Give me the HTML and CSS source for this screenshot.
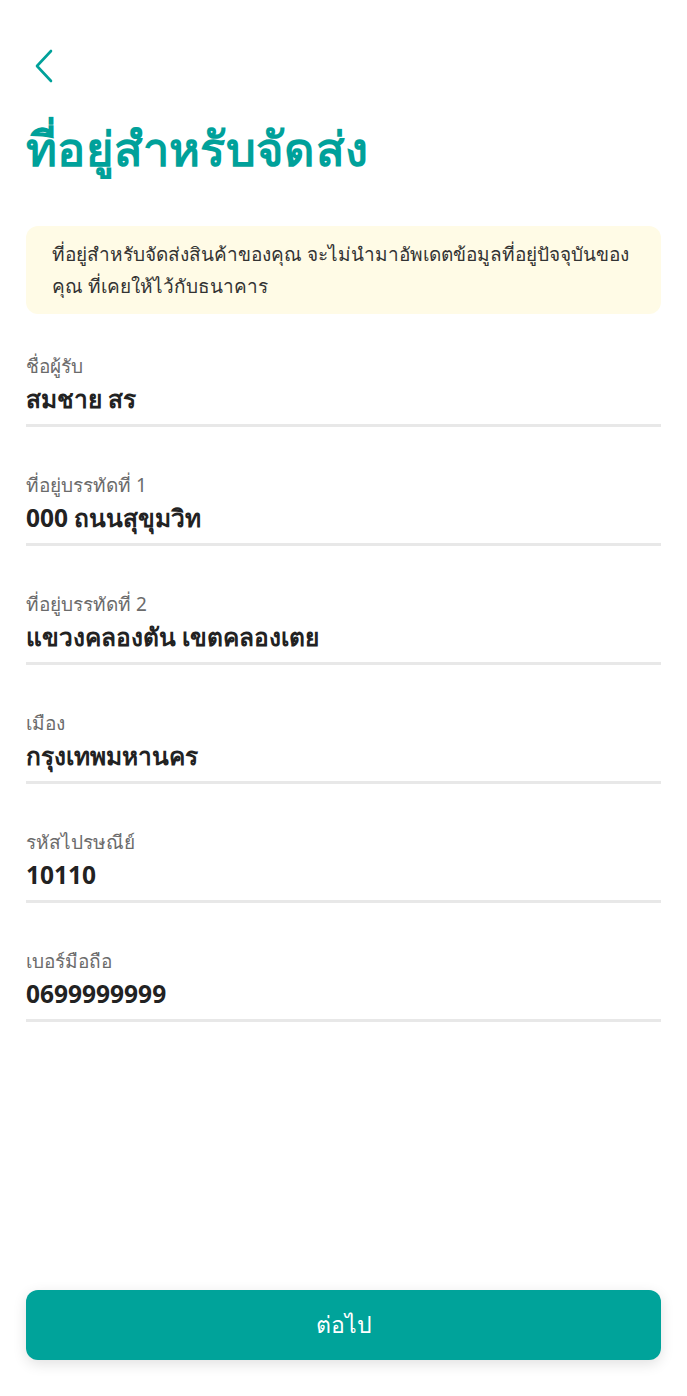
FILE: index.html
```html
<!DOCTYPE html>
<html lang="th">
<head>
  <meta charset="UTF-8" />
  <meta name="viewport" content="width=device-width, initial-scale=1" />
  <title>ที่อยู่สำหรับจัดส่ง</title>
  <link rel="stylesheet" href="styles.css">
</head>
<body>
  <div class="page">
    <header class="top">
      <button class="back-btn" aria-label="back">
        <svg width="22" height="34" viewBox="0 0 22 34">
          <path d="M18 2 L4 17 L18 32" fill="none" stroke="#00a19a" stroke-width="2.6" stroke-linecap="round" stroke-linejoin="round" />
        </svg>
      </button>
      <h1 class="title">ที่อยู่สำหรับจัดส่ง</h1>
    </header>

    <div class="notice">
      ที่อยู่สำหรับจัดส่งสินค้าของคุณ จะไม่นำมาอัพเดตข้อมูลที่อยู่ปัจจุบันของ<br>คุณ ที่เคยให้ไว้กับธนาคาร
    </div>

    <div class="form">
      <div class="field">
        <div class="label">ชื่อผู้รับ</div>
        <div class="value">สมชาย สร</div>
      </div>
      <div class="field">
        <div class="label">ที่อยู่บรรทัดที่ 1</div>
        <div class="value">000 ถนนสุขุมวิท</div>
      </div>
      <div class="field">
        <div class="label">ที่อยู่บรรทัดที่ 2</div>
        <div class="value">แขวงคลองตัน เขตคลองเตย</div>
      </div>
      <div class="field">
        <div class="label">เมือง</div>
        <div class="value">กรุงเทพมหานคร</div>
      </div>
      <div class="field">
        <div class="label">รหัสไปรษณีย์</div>
        <div class="value">10110</div>
      </div>
      <div class="field">
        <div class="label">เบอร์มือถือ</div>
        <div class="value">0699999999</div>
      </div>
    </div>

    <div class="footer">
      <button class="next-btn">ต่อไป</button>
    </div>
  </div>
</body>
</html>
```

FILE: styles.css
```css
body {
  margin: 0;
  background: #ffffff;
  font-family: "Noto Sans", "Liberation Sans", sans-serif;
  color: #222;
}

.page {
  height: 1396px;
  display: flex;
  flex-direction: column;
  padding: 0 26px;
  box-sizing: border-box;
}

/* Header */
.top {
  padding-top: 49px;
}

.back-btn {
  display: block;
  background: none;
  border: none;
  padding: 0 0 0 7px;
  height: 34px;
  cursor: pointer;
}

.title {
  margin: 35px 0 0 0;
  font-size: 47px;
  font-weight: bold;
  color: #00a19a;
  line-height: 60px;
  letter-spacing: 0.3px;
}

/* Info box */
.notice {
  margin-top: 48px;
  background: #fffbe6;
  border-radius: 12px;
  padding: 12px 20px 12px 26px;
  font-size: 19px;
  line-height: 32px;
  color: #333;
  white-space: nowrap;
  overflow: hidden;
}

/* Form fields */
.form {
  margin-top: 29px;
}

.field {
  border-bottom: 3px solid #e8e8e8;
  padding-top: 10px;
  height: 84px;
  box-sizing: border-box;
  margin-bottom: 35px;
}

.label {
  font-size: 19px;
  color: #6b6b6b;
  line-height: 26px;
}

.value {
  font-size: 24.5px;
  font-weight: bold;
  color: #222;
  line-height: 40px;
}

/* Bottom button */
.footer {
  margin-top: auto;
  padding-bottom: 36px;
}

.next-btn {
  width: 100%;
  height: 70px;
  border: none;
  border-radius: 12px;
  background: #00a39a;
  color: #fff;
  font-family: inherit;
  font-size: 23px;
  box-shadow: 0 4px 14px rgba(0, 0, 0, 0.12);
  cursor: pointer;
}
```
